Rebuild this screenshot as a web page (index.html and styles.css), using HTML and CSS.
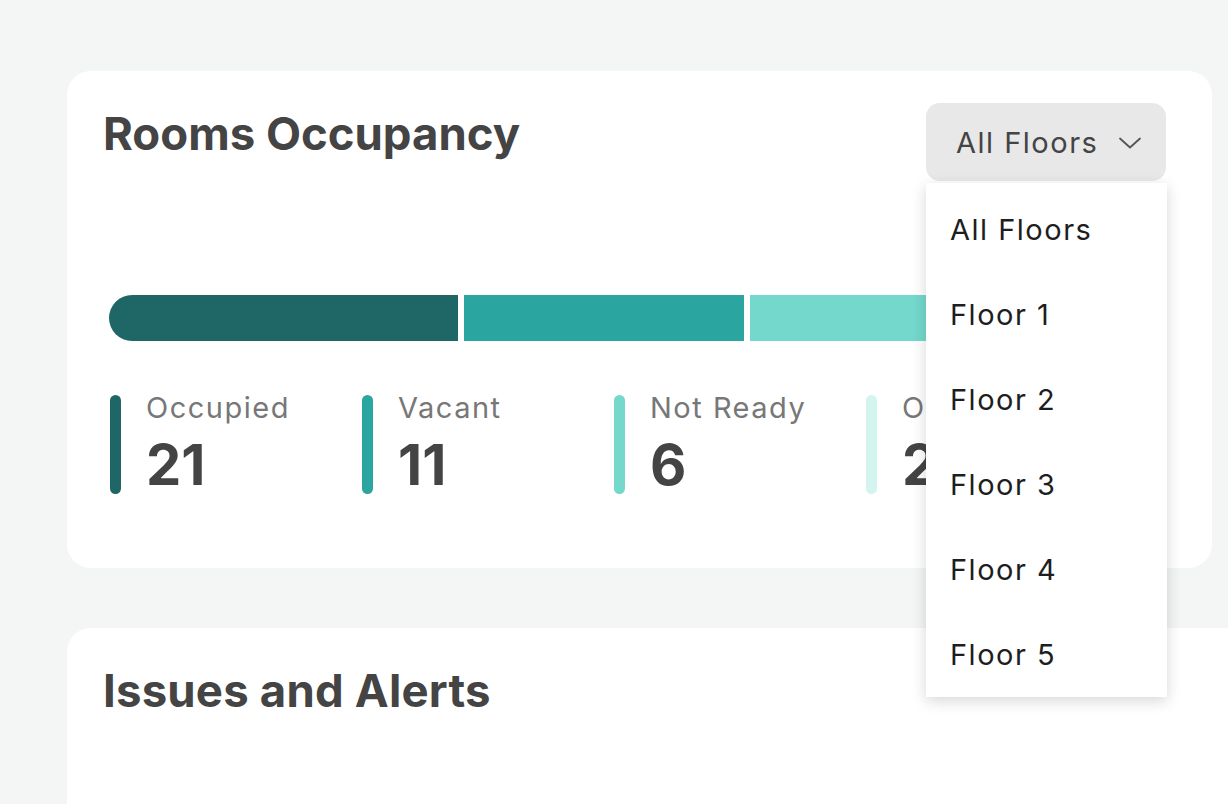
FILE: index.html
```html
<!DOCTYPE html>
<html lang="en">
<head>
<meta charset="utf-8">
<title>Rooms Occupancy</title>
<link rel="stylesheet" href="styles.css">
</head>
<body>
<main class="page">
  <section class="card card-occupancy">
    <header class="card-head">
      <h2 class="card-title">Rooms Occupancy</h2>
      <div class="select">
        <button class="select-btn" type="button">
          <span>All Floors</span>
          <svg class="chev" width="24" height="12" viewBox="0 0 24 12" aria-hidden="true"><path d="M2 1.5 L12 10.5 L22 1.5" fill="none" stroke="#555" stroke-width="1.8" stroke-linecap="round" stroke-linejoin="round"/></svg>
        </button>
        <ul class="menu">
          <li>All Floors</li>
          <li>Floor 1</li>
          <li>Floor 2</li>
          <li>Floor 3</li>
          <li>Floor 4</li>
          <li>Floor 5</li>
        </ul>
      </div>
    </header>
    <div class="bar">
      <span class="seg seg-1" style="width:349px"></span>
      <span class="seg seg-2" style="width:280px"></span>
      <span class="seg seg-3" style="width:250px"></span>
      <span class="seg seg-4" style="width:150px"></span>
    </div>
    <div class="legend">
      <div class="leg leg-1"><span class="mark"></span><div><div class="leg-label">Occupied</div><div class="leg-num">21</div></div></div>
      <div class="leg leg-2"><span class="mark"></span><div><div class="leg-label">Vacant</div><div class="leg-num">11</div></div></div>
      <div class="leg leg-3"><span class="mark"></span><div><div class="leg-label">Not Ready</div><div class="leg-num">6</div></div></div>
      <div class="leg leg-4"><span class="mark"></span><div><div class="leg-label">Out of Order</div><div class="leg-num">2</div></div></div>
    </div>
  </section>
  <section class="card card-issues">
    <h2 class="card-title">Issues and Alerts</h2>
  </section>
</main>
</body>
</html>
```

FILE: styles.css
```css
* { box-sizing: border-box; }
html, body {
  margin: 0;
  padding: 0;
  background: #f4f5f5;
  overflow: hidden;
  height: 804px;
}
body {
  font-family: Inter, "Noto Sans", sans-serif;
  color: #444;
}
.page {
  padding: 71px 0 0 67px;
  display: flex;
  flex-direction: column;
  gap: 60px;
}
.card {
  background: #fff;
  border-radius: 24px;
}
.card-occupancy {
  width: 1145px;
  height: 497px;
  padding: 32px 36px 0 36px;
}
.card-issues {
  width: 1200px;
  height: 300px;
  padding: 32px 36px;
}
.card-head {
  display: flex;
  justify-content: space-between;
  align-items: flex-start;
}
.card-title {
  margin: 4px 0 0 0;
  font-size: 45.5px;
  line-height: 1.2;
  font-weight: 700;
  color: #444;
  letter-spacing: 0;
}
.card-issues .card-title { letter-spacing: 0.2px; }
.select {
  position: relative;
  margin-right: 10px;
}
.select-btn {
  width: 240px;
  height: 78px;
  border: 0;
  border-radius: 14px;
  background: #e8e8e8;
  display: flex;
  align-items: center;
  justify-content: space-between;
  padding: 0 24px 0 30px;
  font-family: Inter, sans-serif;
  font-size: 29px;
  letter-spacing: 1.5px;
  color: #444;
}
.chev { display: block; margin-top: 2px; }
.menu {
  position: absolute;
  top: 80px;
  left: 0;
  width: 241px;
  margin: 0;
  padding: 4px 0 0 0;
  list-style: none;
  background: #fff;
  box-shadow: 0 4px 14px rgba(0, 0, 0, 0.16);
  z-index: 5;
}
.menu li {
  height: 85px;
  display: flex;
  align-items: center;
  padding-left: 24px;
  font-family: Inter, sans-serif;
  font-size: 29px;
  letter-spacing: 1.5px;
  color: #1e1e1e;
}
.bar {
  display: flex;
  gap: 6px;
  margin: 114px 0 0 6px;
  height: 46px;
}
.seg { display: block; height: 46px; }
.seg-1 { background: #1f6766; border-radius: 23px 0 0 23px; }
.seg-2 { background: #2aa5a0; }
.seg-3 { background: #74d8cc; }
.seg-4 { background: #d3f4ef; border-radius: 0 23px 23px 0; }
.legend {
  display: grid;
  grid-template-columns: repeat(4, 252px);
  margin: 54px 0 0 7px;
}
.leg {
  display: flex;
  gap: 25px;
}
.mark {
  width: 11px;
  height: 99px;
  border-radius: 6px;
  flex: none;
}
.leg-1 .mark { background: #1f6766; }
.leg-2 .mark { background: #2aa5a0; }
.leg-3 .mark { background: #74d8cc; }
.leg-4 .mark { background: #d3f4ef; }
.leg-label {
  font-size: 29px;
  line-height: 1.2;
  letter-spacing: 1.5px;
  color: #777;
  margin-top: -4px;
}
.leg-num {
  font-size: 56px;
  line-height: 1.1;
  font-weight: 700;
  color: #444;
  margin-top: 9px;
}
```
